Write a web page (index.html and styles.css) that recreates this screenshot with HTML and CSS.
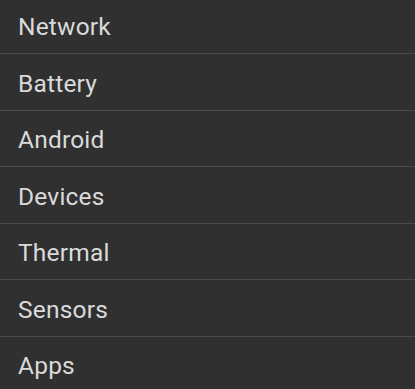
FILE: index.html
```html
<!DOCTYPE html>
<html>
<head>
<meta charset="utf-8">
<link rel="stylesheet" href="styles.css">
</head>
<body>
<ul class="menu">
  <li class="item">Network</li>
  <li class="item">Battery</li>
  <li class="item">Android</li>
  <li class="item">Devices</li>
  <li class="item">Thermal</li>
  <li class="item">Sensors</li>
  <li class="item">Apps</li>
</ul>
</body>
</html>
```
FILE: styles.css
```css
html, body {
  margin: 0;
  padding: 0;
  background: #303030;
  overflow: hidden;
}
.menu {
  list-style: none;
  margin: -2.5px 0 0 0;
  padding: 0;
  font-family: Roboto, "Noto Sans", sans-serif;
}
.item {
  box-sizing: border-box;
  height: 56.5px;
  display: flex;
  align-items: center;
  padding-left: 18px;
  padding-top: 3px;
  font-size: 24.5px;
  letter-spacing: 0.2px;
  color: #dadada;
  border-bottom: 1px solid #4a4a4a;
}
```
